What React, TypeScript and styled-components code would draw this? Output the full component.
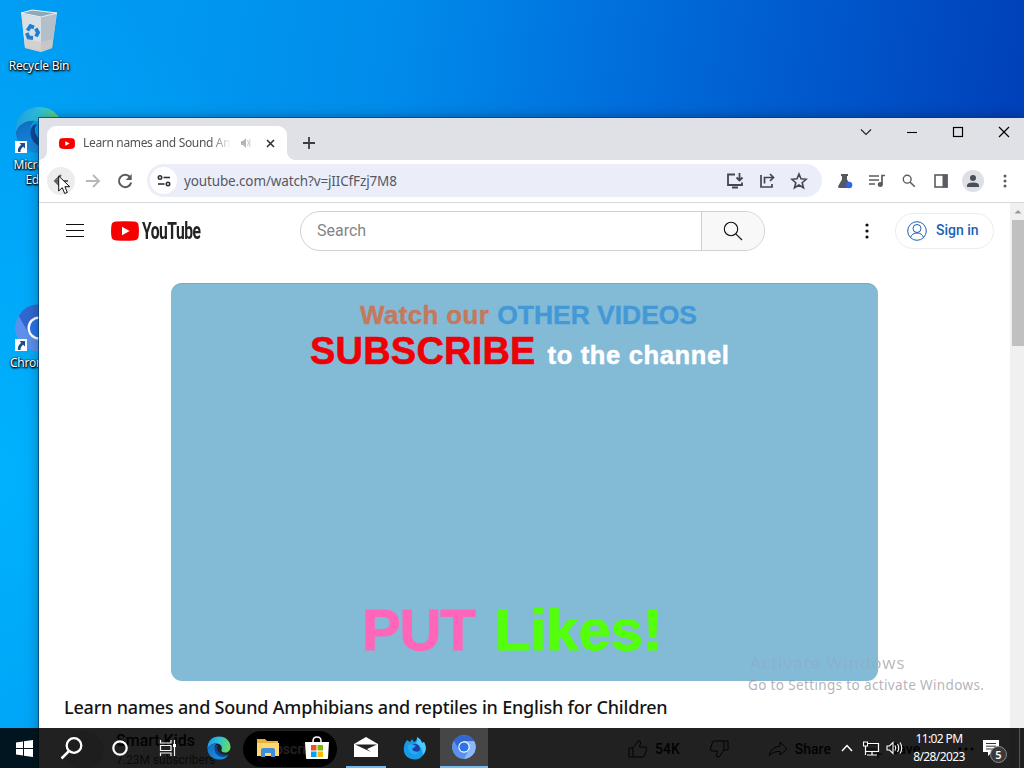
import React from 'react';
import styled, { createGlobalStyle } from 'styled-components';

const Global = createGlobalStyle`
  * { box-sizing: border-box; }
  html, body { margin: 0; padding: 0; overflow: hidden; }
  svg { display: block; flex: none; }
`;

const ui = `'Noto Sans', 'Open Sans', sans-serif`;

const Desktop = styled.div`
  position: relative;
  width: 1024px;
  height: 768px;
  overflow: hidden;
  font-family: ${ui};
  background:
    radial-gradient(ellipse 320px 520px at 0 62%, rgba(0, 182, 255, 0.85), rgba(0, 182, 255, 0)),
    linear-gradient(98deg, #009cf3 0%, #0097f0 18%, #008bea 36%, #006edc 56%, #0054c9 76%, #0040b8 92%, #0038b0 100%);
`;

const Shortcut = styled.div<{ $top: number }>`
  position: absolute;
  left: 0;
  top: ${p => p.$top}px;
  width: 78px;
  display: flex;
  flex-direction: column;
  align-items: center;
`;
const ShortcutLabel = styled.div<{ $gap: number }>`
  margin-top: ${p => p.$gap}px;
  color: #fff;
  font-size: 12px;
  line-height: 15px;
  letter-spacing: -0.25px;
  text-align: center;
  white-space: nowrap;
  text-shadow: 0 1px 2px #000, 1px 1px 2px #000, 0 0 2px rgba(0, 0, 0, 0.8);
`;

const Window = styled.div`
  position: absolute;
  left: 39px;
  top: 118px;
  width: 985px;
  height: 650px;
  background: #fff;
  box-shadow: -1px -1px 0 rgba(10, 60, 110, 0.75), 0 0 12px rgba(0, 0, 0, 0.35);
  display: flex;
  flex-direction: column;
`;
const TabStrip = styled.div`
  height: 42px;
  flex: none;
  background: #dfe1e7;
  display: flex;
  padding: 8px 0 0 8px;
`;
const Tab = styled.div`
  position: relative;
  width: 240px;
  height: 34px;
  background: #fff;
  border-radius: 9px 9px 0 0;
  display: flex;
  align-items: center;
  padding: 0 10px 0 12px;
  &::before, &::after {
    content: '';
    position: absolute;
    bottom: 0;
    width: 8px;
    height: 8px;
  }
  &::before { left: -8px; background: radial-gradient(circle at 0 0, transparent 7.5px, #fff 8px); }
  &::after { right: -8px; background: radial-gradient(circle at 100% 0, transparent 7.5px, #fff 8px); }
`;
const TabTitle = styled.div`
  width: 148px;
  margin-left: 8px;
  font-size: 12px;
  letter-spacing: -0.33px;
  line-height: 18px;
  color: #505458;
  white-space: nowrap;
  overflow: hidden;
  mask-image: linear-gradient(90deg, #000 86%, transparent 100%);
`;
const TabSound = styled.div`
  margin-left: 9px;
  width: 14px;
`;
const TabClose = styled.div`
  margin-left: 12px;
`;
const NewTab = styled.div`
  margin: 11px 0 0 16px;
`;
const Caption = styled.div`
  margin-left: auto;
  display: flex;
  align-items: center;
  gap: 32px;
  height: 12px;
  margin-right: 13px;
`;

const Toolbar = styled.div`
  height: 43px;
  flex: none;
  padding: 5px 10px 6px 8px;
  border-bottom: 1px solid #d5d7db;
  display: flex;
  align-items: center;
`;
const ToolButton = styled.div<{ $shade?: boolean }>`
  width: 28px;
  height: 28px;
  flex: none;
  margin-right: 4px;
  border-radius: 50%;
  display: flex;
  align-items: center;
  justify-content: center;
  background: ${p => (p.$shade ? '#ededee' : 'transparent')};
`;
const Omnibox = styled.div`
  width: 675px;
  height: 33px;
  flex: none;
  margin-left: 4px;
  border-radius: 17px;
  background: #ebeef9;
  display: flex;
  align-items: center;
  padding: 0 14px 0 3px;
`;
const SiteInfo = styled.div`
  width: 27px;
  height: 27px;
  border-radius: 50%;
  background: #fff;
  display: flex;
  align-items: center;
  justify-content: center;
`;
const Url = styled.div`
  margin-left: 7px;
  font-size: 13.5px;
  letter-spacing: -0.14px;
  color: #555863;
  white-space: nowrap;
`;
const OmniActions = styled.div`
  margin-left: auto;
  display: flex;
  gap: 14px;
`;
const Extensions = styled.div`
  margin-left: 14px;
  display: flex;
  align-items: center;
  gap: 14px;
`;
const Avatar = styled.div`
  width: 22px;
  height: 22px;
  margin: 0 -2px;
  border-radius: 50%;
  background: #dde0e6;
  display: flex;
  align-items: center;
  justify-content: center;
`;

const Viewport = styled.div`
  flex: 1;
  min-height: 0;
  display: flex;
`;
const Page = styled.div`
  width: 971px;
  display: flex;
  flex-direction: column;
  overflow: hidden;
`;
const Scrollbar = styled.div`
  width: 14px;
  background: #f0f0f1;
  padding: 5px 0 0 2px;
`;
const Thumb = styled.div`
  margin-top: 6px;
  height: 126px;
  background: #c0c0c1;
`;
const Masthead = styled.div`
  height: 56px;
  flex: none;
  padding: 0 16px 0 27px;
  display: flex;
  align-items: center;
`;
const Menu = styled.div`
  padding-bottom: 2px;
`;
const Logo = styled.div`
  width: 91px;
  margin-left: 27px;
  display: flex;
  align-items: center;
  gap: 3px;
`;
const LogoText = styled.div`
  width: 59px;
  flex: none;
  font-family: Roboto, sans-serif;
  font-weight: 700;
  font-size: 23px;
  line-height: 22px;
  padding-top: 2px;
  letter-spacing: -0.7px;
  color: #222;
  white-space: nowrap;
  transform: scaleX(0.68);
  transform-origin: 0 50%;
`;
const SearchBox = styled.div`
  margin-left: 98px;
  width: 465px;
  height: 40px;
  border: 1px solid #d0d0d0;
  border-radius: 20px;
  overflow: hidden;
  display: flex;
`;
const SearchInput = styled.div`
  width: 401px;
  padding-left: 16px;
  border-right: 1px solid #d0d0d0;
  font: 16px/37px Roboto, sans-serif;
  color: #858585;
`;
const SearchButton = styled.div`
  flex: 1;
  background: #f8f8f8;
  display: flex;
  align-items: center;
  justify-content: center;
`;
const SignIn = styled.div`
  margin-left: 26px;
  width: 99px;
  height: 36px;
  border: 1px solid #ececec;
  border-radius: 18px;
  display: flex;
  align-items: center;
  gap: 9px;
  padding-left: 11px;
  font: 500 14px Roboto, sans-serif;
  color: #1a5fb8;
  white-space: nowrap;
`;
const SignInLabel = styled.span`
  padding-bottom: 2px;
`;
const Kebab = styled.div`
  margin-left: 100px;
`;
const Video = styled.div`
  margin: 24px 0 0 132px;
  width: 707px;
  height: 398px;
  flex: none;
  border-radius: 11px;
  background: #83bbd7;
  border-top: 1px solid #78a8bb;
  font-family: 'Liberation Sans', Arial, sans-serif;
  font-weight: 700;
  white-space: nowrap;
  display: flex;
  flex-direction: column;
`;
const VideoLine = styled.div<{ $left: number; $top: number; $height: number }>`
  margin: ${p => p.$top}px 0 0 ${p => p.$left}px;
  height: ${p => p.$height}px;
  display: flex;
  align-items: baseline;
`;
const Word = styled.span<{ $size: number; $color: string; $spacing?: number; $gap?: number; $stroke?: number }>`
  font-size: ${p => p.$size}px;
  line-height: 1;
  color: ${p => p.$color};
  letter-spacing: ${p => p.$spacing ?? 0}px;
  margin-right: ${p => p.$gap ?? 0}px;
  -webkit-text-stroke: ${p => p.$stroke ?? 0}px ${p => p.$color};
`;
const Title = styled.div`
  margin: 12px 0 0 25px;
  height: 28px;
  flex: none;
  font-size: 18px;
  line-height: 28px;
  font-weight: 500;
  letter-spacing: -0.19px;
  color: #141414;
  white-space: nowrap;
`;
const MetaRow = styled.div`
  margin: 10px 0 0 25px;
  display: flex;
  font-family: Roboto, sans-serif;
  color: #0a0a0a;
  white-space: nowrap;
`;
const ChannelPicture = styled.div`
  width: 40px;
  height: 38px;
  border-radius: 50%;
  background: #e4e4e4;
`;
const Channel = styled.div`
  margin-left: 12px;
  width: 127px;
`;
const ChannelName = styled.div`
  font-weight: 500;
  font-size: 16px;
  line-height: 19px;
`;
const Subscribers = styled.div`
  font-size: 12px;
  line-height: 20px;
  color: #555;
`;
const SubscribeButton = styled.div`
  width: 94px;
  height: 36px;
  border-radius: 18px;
  background: #000;
  color: #fff;
  font: 500 14px/36px Roboto, sans-serif;
  text-align: center;
`;
const PageActions = styled.div`
  margin-left: 291px;
  height: 36px;
  display: flex;
  align-items: center;
  font-weight: 500;
  font-size: 14px;
`;
const ActionText = styled.span<{ $after: number }>`
  margin: 0 ${p => p.$after}px 0 7px;
`;

const Watermark = styled.div`
  position: absolute;
  left: 748px;
  top: 650px;
  color: rgba(150, 150, 156, 0.72);
  white-space: nowrap;
`;
const WatermarkTitle = styled.div`
  width: max-content;
  font-size: 17px;
  line-height: 25px;
  padding-left: 2px;
  letter-spacing: 0.95px;
  background: linear-gradient(90deg, rgba(140, 168, 186, 0.5) 0 128px, #b9b9bb 130px);
  background-clip: text;
  color: transparent;
`;
const WatermarkText = styled.div`
  font-size: 13.5px;
  line-height: 20px;
  letter-spacing: 0.36px;
`;

const Taskbar = styled.div`
  position: absolute;
  left: 0;
  bottom: 0;
  width: 1024px;
  height: 40px;
  background: rgba(0, 0, 0, 0.87);
  display: flex;
`;
const TaskItem = styled.div<{ $w?: number; $active?: boolean; $open?: boolean }>`
  width: ${p => p.$w ?? 49}px;
  height: 40px;
  flex: none;
  display: flex;
  align-items: center;
  justify-content: center;
  background: ${p => (p.$active ? '#464648' : 'transparent')};
  border-bottom: ${p => (p.$active || p.$open ? '2px solid #76b9ed' : 'none')};
`;
const Tray = styled.div`
  margin-left: auto;
  display: flex;
  align-items: center;
  color: #fff;
`;
const Clock = styled.div`
  width: 66px;
  margin-left: 1px;
  font-size: 12px;
  line-height: 18px;
  letter-spacing: -0.6px;
  text-align: center;
  white-space: nowrap;
`;
const Notifications = styled.div`
  position: relative;
  width: 34px;
  height: 40px;
  padding: 12px 0 0 11px;
`;
const Badge = styled.div`
  position: absolute;
  left: 18px;
  top: 18px;
  width: 17px;
  height: 17px;
  border-radius: 50%;
  border: 1px solid #8b8b8b;
  background: #3a3a3a;
  font-size: 11px;
  font-weight: 600;
  line-height: 15px;
  text-align: center;
`;
const ShowDesktop = styled.div`
  width: 5px;
  height: 40px;
  margin-left: 13px;
  border-left: 1px solid #555;
`;
const PointerLayer = styled.div`
  position: absolute;
  left: 58px;
  top: 175px;
`;

const RecycleBin = () => (
  <svg width="40" height="44" viewBox="0 0 40 44">
    <path d="M2 4 L13 1 L38 4 L33 39 L22 43 L6 39 Z" fill="#c3ced6" />
    <path d="M2 4 L13 1 L38 4 L22 8 Z" fill="#8fa9b8" stroke="#e9f0f4" strokeWidth="1" />
    <path d="M2.500 5 L22 8.500 L22 42 L6 38.500 Z" fill="#d9e0e5" />
    <path d="M22 8.500 L37.500 5 L33 39 L22 42.500 Z" fill="#b4c0c9" />
    <path d="M6 30 L22 33 L34 30 L33 39 L22 43 L6 39 Z" fill="#cfcac8" opacity=".7" />
    <g fill="none" stroke="#1f7fce" strokeWidth="3.800">
      <path d="M8.500 21.500 L11.500 17 L15 18.500" />
      <path d="M16.800 19.500 L19 23.500 L17 27.500" />
      <path d="M14 29 L9.500 28.500 L7.800 24" />
    </g>
  </svg>
);

const EdgeIcon = ({ size }: { size: number }) => (
  <svg width={size} height={size} viewBox="0 0 48 48">
    <defs>
      <linearGradient id="edgeTop" x1="0" x2="1" y1=".2" y2=".4">
        <stop offset="0" stopColor="#1c9be0" /><stop offset=".5" stopColor="#30c0d8" /><stop offset="1" stopColor="#63dd62" />
      </linearGradient>
      <linearGradient id="edgeLow" x1="0" x2="1" y1="0" y2="1">
        <stop offset="0" stopColor="#1168bd" /><stop offset=".5" stopColor="#1584d8" /><stop offset="1" stopColor="#1a8fe0" />
      </linearGradient>
    </defs>
    <path d="M1 26 C0 10 11 1 24 1 C38 1 47 11 47 22 C47 29 42 33 36 33 C31 33 28 31 29 28 C31 25 30 17 21 15 C13 14 4 18 1 26 Z" fill="url(#edgeTop)" />
    <path d="M1 26 C4 17 13 14 19 15 C14 20 14 29 20 36 C26 42 35 42 43 38 C38 45 31 48 23 47 C10 46 1 37 1 26 Z" fill="url(#edgeLow)" />
    <path d="M20 18 C15 21 14 27 17 33 C21 41 31 44 40 40 L43 37 C34 39 25 36 22 30 C19 26 19 21 22 19 Z" fill="#0f4896" />
  </svg>
);

const ChromiumIcon = ({ size }: { size: number }) => (
  <svg width={size} height={size} viewBox="0 0 48 48">
    <circle cx="24" cy="24" r="23.500" fill="#659df2" />
    <path d="M3.600 12.200 A23.500 23.500 0 0 1 44.400 12.200 L24 12.500 L14 30 Z" fill="#3267d1" />
    <path d="M3.600 12.200 A23.500 23.500 0 0 0 24 47.500 L34 30 L14 30 Z" fill="#5b91ea" />
    <path d="M24 12.500 H44.400 A23.500 23.500 0 0 1 24 47.500 L34 30 Z" fill="#8db8f7" />
    <circle cx="24" cy="24" r="11.500" fill="#fff" />
    <circle cx="24" cy="24" r="9.200" fill="#2a74e6" />
  </svg>
);

const ShortcutIcon = styled.div`
  position: relative;
  width: 48px;
  height: 48px;
`;
const ArrowBadge = styled.div`
  position: absolute;
  left: 0;
  bottom: 1px;
  width: 12px;
  height: 12px;
  background: #fff;
`;
const ShortcutArrow = () => (
  <ArrowBadge>
    <svg width="12" height="12" viewBox="0 0 12 12">
      <path d="M4.500 2 H10 V7.500 L8.200 5.700 C6 7.500 5.500 8.500 5.500 11 H3 C2.500 8 3.500 6 6.200 3.800 Z" fill="#1c4f8c" />
    </svg>
  </ArrowBadge>
);

const PlayMark = ({ width, height }: { width: number; height: number }) => (
  <svg width={width} height={height} viewBox="0 0 28 20" preserveAspectRatio="none">
    <path d="M5 .6 Q14 -.3 23 .6 Q27 .9 27.500 4 Q28.400 10 27.500 16 Q27 19.100 23 19.400 Q14 20.300 5 19.400 Q1 19.100 .5 16 Q-.4 10 .5 4 Q1 .9 5 .6 Z" fill="#f70000" />
    <path d="M11 5.700 V14.300 L18.700 10 Z" fill="#fff" />
  </svg>
);

const line = (color: string, w: number) => ({ fill: 'none', stroke: color, strokeWidth: w });

export default function App() {
  return (
    <Desktop>
      <Global />
      <Shortcut $top={9}>
        <RecycleBin />
        <ShortcutLabel $gap={5}>Recycle Bin</ShortcutLabel>
      </Shortcut>
      <Shortcut $top={106}>
        <ShortcutIcon><EdgeIcon size={48} /><ShortcutArrow /></ShortcutIcon>
        <ShortcutLabel $gap={3}>Microsoft<br />Edge</ShortcutLabel>
      </Shortcut>
      <Shortcut $top={304}>
        <ShortcutIcon><ChromiumIcon size={48} /><ShortcutArrow /></ShortcutIcon>
        <ShortcutLabel $gap={3}>Chromium</ShortcutLabel>
      </Shortcut>

      <Window>
        <TabStrip>
          <Tab>
            <PlayMark width={16} height={11} />
            <TabTitle>Learn names and Sound Amphibians</TabTitle>
            <TabSound>
              <svg width="13" height="12" viewBox="0 0 13 12">
                <path d="M1 4 H3 L6 1 V11 L3 8 H1 Z" fill="#b3b5b8" />
                <path d="M7.500 3 Q9.500 6 7.500 9 M9.800 2 V10" {...line('#c8cacc', 1)} />
              </svg>
            </TabSound>
            <TabClose>
              <svg width="9" height="9" viewBox="0 0 9 9"><path d="M1 1 L8 8 M8 1 L1 8" {...line('#303236', 1.6)} /></svg>
            </TabClose>
          </Tab>
          <NewTab>
            <svg width="12" height="12" viewBox="0 0 12 12"><path d="M6 0 V12 M0 6 H12" {...line('#3a3d42', 1.8)} /></svg>
          </NewTab>
          <Caption>
            <svg width="14" height="12" viewBox="0 0 14 12"><path d="M2 3.500 L7 8.500 L12 3.500" {...line('#222', 1.1)} /></svg>
            <svg width="14" height="12" viewBox="0 0 14 12"><path d="M2 6.500 H12" {...line('#000', 1.1)} /></svg>
            <svg width="14" height="12" viewBox="0 0 14 12"><rect x="2.500" y="1.500" width="9" height="9" {...line('#000', 1.2)} /></svg>
            <svg width="14" height="12" viewBox="0 0 14 12"><path d="M2 1 L12 11 M12 1 L2 11" {...line('#000', 1.2)} /></svg>
          </Caption>
        </TabStrip>

        <Toolbar>
          <ToolButton $shade>
            <svg width="16" height="16" viewBox="0 0 16 16"><path d="M15 8 H2 M8 2 L2 8 L8 14" {...line('#5f6368', 2)} /></svg>
          </ToolButton>
          <ToolButton>
            <svg width="16" height="16" viewBox="0 0 16 16"><path d="M1 8 H14 M8 2 L14 8 L8 14" {...line('#b5b7ba', 1.8)} /></svg>
          </ToolButton>
          <ToolButton>
            <svg width="16" height="16" viewBox="0 0 16 16">
              <path d="M13 4 A6.200 6.200 0 1 0 14.200 9.500" {...line('#595c61', 2)} />
              <path d="M14.700 1 V7 H8.700 Z" fill="#595c61" />
            </svg>
          </ToolButton>
          <Omnibox>
            <SiteInfo>
              <svg width="14" height="14" viewBox="0 0 14 14">
                <g {...line('#2f3239', 1.6)}>
                  <circle cx="3" cy="3.500" r="1.700" /><path d="M6.500 3.500 H13" />
                  <circle cx="11" cy="10" r="1.700" /><path d="M1 10 H7.500" />
                </g>
              </svg>
            </SiteInfo>
            <Url>youtube.com/watch?v=jIICfFzj7M8</Url>
            <OmniActions>
              <svg width="18" height="18" viewBox="0 0 18 18">
                <path d="M9 2.500 H2 V13 H16 V10.500 M6 15.500 H12 M13.500 1 V8 M10.500 5.500 L13.500 8.500 L16.500 5.500" {...line('#44474e', 1.8)} />
              </svg>
              <svg width="18" height="18" viewBox="0 0 18 18">
                <path d="M3 3 V15 H14 V12 M6.500 11.500 V5.500 H15 M12 2 L15.500 5.500 L12 9" {...line('#44474e', 1.7)} />
              </svg>
              <svg width="18" height="18" viewBox="0 0 18 18">
                <path d="M9 2 L11 6.800 L16.200 7.300 L12.200 10.700 L13.500 15.700 L9 13 L4.500 15.700 L5.800 10.700 L1.800 7.300 L7 6.800 Z" {...line('#44474e', 1.6)} />
              </svg>
            </OmniActions>
          </Omnibox>
          <Extensions>
            <svg width="18" height="18" viewBox="0 0 18 18">
              <path d="M5 2 H12 V4 H11 V7.500 L15 14 Q15.500 16 13.500 16 H3.500 Q1.500 16 2.200 14 L6 7.500 V4 H5 Z" fill="#55595f" />
              <circle cx="13" cy="13" r="3.300" fill="#2f66e8" />
            </svg>
            <svg width="18" height="18" viewBox="0 0 18 18">
              <path d="M1 4 H11 M1 8 H11 M1 12 H7 M17 3.500 H14 V12.500" {...line('#595c61', 1.7)} />
              <circle cx="12.300" cy="12.500" r="2.500" fill="#595c61" />
            </svg>
            <svg width="18" height="18" viewBox="0 0 18 18">
              <circle cx="7.200" cy="7.200" r="3.900" {...line('#595c61', 1.4)} />
              <path d="M10.200 10.200 L14.800 14.800" {...line('#595c61', 1.6)} />
            </svg>
            <svg width="18" height="18" viewBox="0 0 18 18">
              <rect x="3" y="3" width="12" height="12" {...line('#595c61', 1.6)} />
              <rect x="10.500" y="2.500" width="5" height="13" fill="#595c61" />
            </svg>
            <Avatar>
              <svg width="14" height="14" viewBox="0 0 14 14">
                <circle cx="7" cy="4" r="3" fill="#4b4f55" />
                <path d="M1 13 V11.500 Q1 8.500 7 8.500 Q13 8.500 13 11.500 V13 Z" fill="#4b4f55" />
              </svg>
            </Avatar>
            <svg width="18" height="18" viewBox="0 0 18 18" fill="#595c61">
              <circle cx="9" cy="4" r="1.500" /><circle cx="9" cy="9" r="1.500" /><circle cx="9" cy="14" r="1.500" />
            </svg>
          </Extensions>
        </Toolbar>

        <Viewport>
          <Page>
            <Masthead>
              <Menu>
                <svg width="18" height="13" viewBox="0 0 18 13"><path d="M0 .5 H18 M0 6.500 H18 M0 12.500 H18" {...line('#0f0f0f', 1)} /></svg>
              </Menu>
              <Logo>
                <PlayMark width={28} height={20} />
                <LogoText>YouTube</LogoText>
              </Logo>
              <SearchBox>
                <SearchInput>Search</SearchInput>
                <SearchButton>
                  <svg width="20" height="20" viewBox="0 0 20 20">
                    <circle cx="8" cy="8" r="6.700" {...line('#111', 1.1)} />
                    <path d="M12.800 12.800 L19 19" {...line('#111', 1.1)} />
                  </svg>
                </SearchButton>
              </SearchBox>
              <Kebab>
                <svg width="4" height="16" viewBox="0 0 4 16" fill="#0f0f0f">
                  <circle cx="2" cy="2" r="1.600" /><circle cx="2" cy="8" r="1.600" /><circle cx="2" cy="14" r="1.600" />
                </svg>
              </Kebab>
              <SignIn>
                <svg width="20" height="20" viewBox="0 0 20 20">
                  <g {...line('#1a5fb8', 1)}>
                    <circle cx="10" cy="10" r="9.300" /><circle cx="10" cy="7.500" r="4" />
                    <path d="M3.500 16.500 Q5 12 10 12 Q15 12 16.500 16.500" />
                  </g>
                </svg>
                <SignInLabel>Sign in</SignInLabel>
              </SignIn>
            </Masthead>
            <Video>
              <VideoLine $left={189} $top={18} $height={30}>
                <Word $size={26} $color="#c7775a" $gap={8} $spacing={0.35} $stroke={0.4}>Watch our</Word>
                <Word $size={26.500} $color="#4299d6" $spacing={-0.05} $stroke={0.4}>OTHER VIDEOS</Word>
              </VideoLine>
              <VideoLine $left={139} $top={0} $height={40}>
                <Word $size={38} $color="#ee0006" $gap={12} $spacing={0.2} $stroke={0.6}>SUBSCRIBE</Word>
                <Word $size={25.500} $color="#fff" $spacing={0.65} $stroke={0.5}>to the channel</Word>
              </VideoLine>
              <VideoLine $left={191} $top={229} $height={60}>
                <Word $size={58} $color="#ff66b9" $gap={20} $spacing={-1.1} $stroke={0.9}>PUT</Word>
                <Word $size={58} $color="#53ff0a" $stroke={0.9}>Likes!</Word>
              </VideoLine>
            </Video>
            <Title>Learn names and Sound Amphibians and reptiles in English for Children</Title>
            <MetaRow>
              <ChannelPicture />
              <Channel>
                <ChannelName>Smart Kids</ChannelName>
                <Subscribers>7.23M subscribers</Subscribers>
              </Channel>
              <SubscribeButton>Subscribe</SubscribeButton>
              <PageActions>
                <svg width="20" height="20" viewBox="0 0 20 20"><path d="M1 9 H5 V18 H1 Z M5 9 L10 2 Q13 1 12.500 4 L11.500 8 H17 Q19 8 18.500 10 L16.500 17 Q16 18 15 18 H5" {...line('#0f0f0f', 1)} /></svg>
                <ActionText $after={29}>54K</ActionText>
                <svg width="20" height="20" viewBox="0 0 20 20"><path d="M19 2 H15 V11 H19 Z M15 11 L10 18 Q7 19 7.500 16 L8.500 12 H3 Q1 12 1.500 10 L3.500 3 Q4 2 5 2 H15" {...line('#0f0f0f', 1)} /></svg>
                <ActionText $after={32} />
                <svg width="20" height="20" viewBox="0 0 20 20"><path d="M12 3 L19 10 L12 16 V12.500 Q5 12 1 17 Q3 8 12 7 Z" {...line('#0f0f0f', 1)} /></svg>
                <ActionText $after={32}>Share</ActionText>
                <svg width="20" height="20" viewBox="0 0 20 20"><path d="M2 5 H14 M2 10 H14 M2 15 H9 M15 11 V19 M11 15 H19" {...line('#0f0f0f', 1)} /></svg>
                <ActionText $after={38}>Save</ActionText>
                <svg width="16" height="4" viewBox="0 0 16 4"><circle cx="2" cy="2" r="1.500" /><circle cx="8" cy="2" r="1.500" /><circle cx="14" cy="2" r="1.500" /></svg>
              </PageActions>
            </MetaRow>
          </Page>
          <Scrollbar>
            <svg width="12" height="6" viewBox="0 0 12 6"><path d="M2.500 5.500 L6 2 L9.500 5.500 Z" fill="#999" /></svg>
            <Thumb />
          </Scrollbar>
        </Viewport>
      </Window>

      <Watermark>
        <WatermarkTitle>Activate Windows</WatermarkTitle>
        <WatermarkText>Go to Settings to activate Windows.</WatermarkText>
      </Watermark>

      <Taskbar>
        <TaskItem $w={48}>
          <svg width="17" height="17" viewBox="0 0 17 17" fill="#fff">
            <path d="M0 2.500 L7 1.500 V8 H0 Z M8 1.300 L17 0 V8 H8 Z M0 9 H7 V15.500 L0 14.500 Z M8 9 H17 V17 L8 15.700 Z" />
          </svg>
        </TaskItem>
        <TaskItem $w={48}>
          <svg width="24" height="24" viewBox="0 0 24 24">
            <circle cx="14" cy="9.500" r="7.300" {...line('#fff', 2.3)} /><path d="M9 15 L1.500 22.500" {...line('#fff', 2.5)} />
          </svg>
        </TaskItem>
        <TaskItem $w={48}>
          <svg width="18" height="18" viewBox="0 0 18 18"><circle cx="9" cy="9" r="6.700" {...line('#fff', 2.2)} /></svg>
        </TaskItem>
        <TaskItem $w={48}>
          <svg width="18" height="18" viewBox="0 0 18 18">
            <path d="M1.500 1 V4 H12 V1 M1.500 17 V14 H12 V17 M1.500 6.500 H12 V11.500 H1.500 Z M15.500 1 V17" {...line('#f5f5f5', 1.2)} />
            <rect x="14" y="5" width="3" height="3" fill="#fff" />
          </svg>
        </TaskItem>
        <TaskItem $w={53}><EdgeIcon size={24} /></TaskItem>
        <TaskItem $w={45}>
          <svg width="22" height="20" viewBox="0 0 22 20">
            <path d="M0 1 H8 L10 3 H21 V18 H0 Z" fill="#e9b13a" /><path d="M0 5 H22 V18 H0 Z" fill="#ffd76e" />
            <path d="M4 19 V12 Q4 10 6 10 H16 Q18 10 18 12 V19 H14 V15 H8 V19 Z" fill="#3f8fd8" />
          </svg>
        </TaskItem>
        <TaskItem $w={53}>
          <svg width="24" height="24" viewBox="0 0 24 24">
            <path d="M8 7 V5 Q8 1 12 1 Q16 1 16 5 V7" {...line('#fff', 1.5)} />
            <path d="M0 6 H24 L23 22 Q23 23 22 23 H2 Q1 23 1 22 Z" fill="#fff" />
            <rect x="6" y="9" width="5.500" height="5.500" fill="#f25022" /><rect x="12.500" y="9" width="5.500" height="5.500" fill="#7fba00" />
            <rect x="6" y="15.500" width="5.500" height="5.500" fill="#00a4ef" /><rect x="12.500" y="15.500" width="5.500" height="5.500" fill="#ffb900" />
          </svg>
        </TaskItem>
        <TaskItem $w={3} />
        <TaskItem $w={40} $open>
          <svg width="24" height="22" viewBox="0 0 24 22">
            <path d="M0 8 L12 1 L24 8 V21 H0 Z" fill="#fff" /><path d="M1 8.500 L23 8.500 L13 13 L17 16 Z" fill="#222" />
          </svg>
        </TaskItem>
        <TaskItem $w={4} />
        <TaskItem $w={50}>
          <svg width="24" height="24" viewBox="0 0 24 24">
            <path d="M4 4 L7 6 L9 3 L11 6 Q14 5 14 1 Q18 3 19 7 L21 6 Q25 13 21 18 Q17 24 11 23.500 Q3 23 1 16 Q0 9 4 4 Z" fill="#169be8" />
            <path d="M14 1 Q18 3 19 7 L21 6 Q25 13 20 19 Q19 10 13 7 Q15 4 14 1 Z" fill="#4fc9fb" />
            <circle cx="12" cy="13" r="5" fill="#1d3fa8" />
            <path d="M5 9 Q9 7 13 10 L9 13 Q11 17 17 15 Q14 20 9 18 Q4 15 5 9 Z" fill="#25aaf0" />
          </svg>
        </TaskItem>
        <TaskItem $w={48} $active><ChromiumIcon size={24} /></TaskItem>
        <Tray>
          <svg width="12" height="12" viewBox="0 0 12 12"><path d="M1 9 L6 3.500 L11 9" {...line('#fff', 1.5)} /></svg>
          <svg width="30" height="18" viewBox="0 0 30 18">
            <path d="M14 4.500 H25.500 V12.500 H13 M19 12.500 V16 M14 16 H24 M12.500 7 V16" {...line('#fff', 1.2)} />
            <rect x="10.500" y="3" width="4" height="4" {...line('#fff', 1)} />
          </svg>
          <svg width="22" height="18" viewBox="0 0 22 18">
            <path d="M4 7 H6.500 L10 3.500 V14.500 L6.500 11 H4 Z M12 6.500 Q13.500 9 12 11.500 M14.500 5 Q17 9 14.500 13 M17 3.500 Q20.500 9 17 14.500" {...line('#fff', 1.1)} />
          </svg>
          <Clock>11:02 PM<br />8/28/2023</Clock>
          <Notifications>
            <svg width="17" height="16" viewBox="0 0 17 16">
              <path d="M0 0 H16 V12 H9 L5 16 V12 H0 Z" fill="#fff" /><path d="M3 3.500 H13 M3 6.200 H13 M3 9 H13" {...line('#333', 1)} />
            </svg>
            <Badge>5</Badge>
          </Notifications>
          <ShowDesktop />
        </Tray>
      </Taskbar>
      <PointerLayer>
        <svg width="13" height="20" viewBox="0 0 13 20">
          <path d="M.7 1 V16 L4.300 12.700 L6.700 18.500 L9.300 17.400 L6.900 11.700 H11.700 Z" fill="#fff" stroke="#111" strokeWidth="1" />
        </svg>
      </PointerLayer>
    </Desktop>
  );
}
